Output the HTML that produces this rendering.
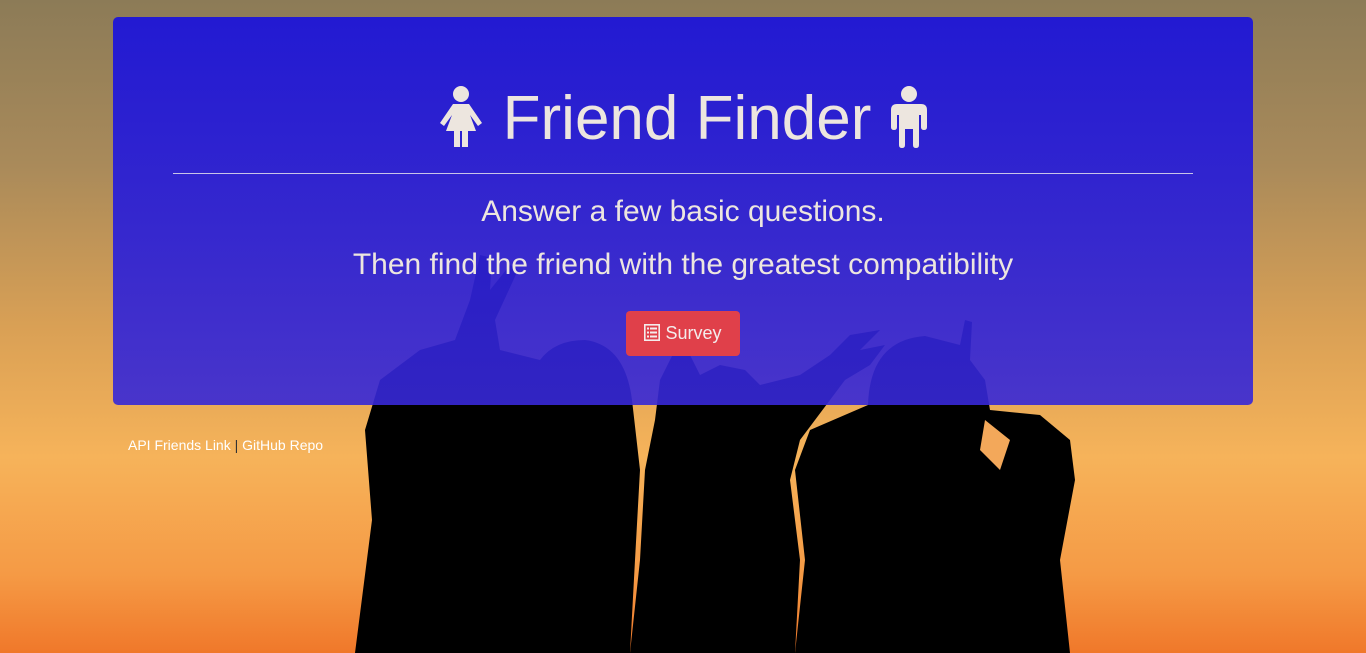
<!DOCTYPE html>
<html><head><meta charset="utf-8"><style>
html,body{margin:0;padding:0;width:1366px;height:653px;overflow:hidden}
body{position:relative;font-family:"Liberation Sans",Arial,sans-serif;background:linear-gradient(180deg,#8c7b57 0%,#a98a5a 25%,#d9a055 50%,#f6b35a 70%,#f59a45 88%,#f0782a 100%)}
svg.bg{position:absolute;left:0;top:0}
.jumbo{position:absolute;left:113px;top:17px;width:1140px;height:388px;border-radius:5px;background:linear-gradient(180deg,rgba(30,22,215,0.96) 0%,rgba(55,40,215,0.9) 100%);text-align:center;color:#ede6df}
h1{margin:0;position:absolute;top:67px;left:0;width:100%;font-weight:normal;font-size:62px;line-height:70px}
hr{position:absolute;left:60px;top:156px;width:1020px;margin:0;border:0;border-top:1px solid #c8c4e8}
.p1{position:absolute;top:178px;width:100%;font-size:30px}
.p2{position:absolute;top:231px;width:100%;font-size:30px}
.btn{position:absolute;left:513px;top:294px;width:114px;height:45px;border-radius:4px;background:#e0404a;color:#f4ecec;font-size:18px;line-height:45px}
.foot{position:absolute;left:128px;top:437px;font-size:14px;color:#fff}
.foot span{color:#333}
</style></head><body>
<svg class="bg" width="1366" height="653" viewBox="0 0 1366 653">
<g fill="#000">
<path d="M355 653 L372 520 L365 430 L380 380 L420 350 L455 340 L470 300 L480 255 L492 258 L490 290 L510 265 L518 270 L495 320 L500 350 L540 360 Q555 340 585 340 Q625 345 632 400 L640 470 L635 560 L630 653 Z"/>
<path d="M630 653 L640 560 L645 470 L655 420 L660 380 L675 350 L690 355 L700 375 L720 365 L745 370 L760 385 L800 375 L830 355 L850 335 L880 330 L860 350 L885 345 L870 365 L845 380 L800 440 L790 480 L800 560 L795 653 Z"/>
<path d="M795 653 L805 560 L795 470 L810 430 L868 405 Q870 340 925 336 L960 345 L965 320 L972 322 L970 360 L985 380 L990 410 L1040 415 L1070 440 L1075 480 L1060 560 L1070 653 Z"/>
<path d="M985 420 L1010 440 L1000 470 L980 450 Z" fill="#f3a85a"/>
</g>
</svg>
<div class="jumbo">
<h1><svg width="48" height="64" viewBox="0 0 48 64" style="vertical-align:-10px"><g fill="#ede6df"><circle cx="24" cy="9" r="8"/><path d="M16 19 L32 19 L45 38 L41 41 L33 30 L39 46 L31 46 L31 62 L25 62 L25 46 L23 46 L23 62 L17 62 L17 46 L9 46 L15 30 L7 41 L3 38 Z"/></g></svg> Friend Finder <svg width="40" height="64" viewBox="0 0 40 64" style="vertical-align:-10px"><g fill="#ede6df"><circle cx="20" cy="9" r="8"/><path d="M8 19 L32 19 Q38 19 38 25 L38 42 Q38 45 35 45 Q32 45 32 42 L32 30 L30 30 L30 60 Q30 63 27 63 Q24 63 24 60 L24 44 L16 44 L16 60 Q16 63 13 63 Q10 63 10 60 L10 30 L8 30 L8 42 Q8 45 5 45 Q2 45 2 42 L2 25 Q2 19 8 19 Z"/></g></svg></h1>
<hr>
<div class="p1">Answer a few basic questions.</div>
<div class="p2">Then find the friend with the greatest compatibility</div>
<div class="btn"><svg width="16" height="17" viewBox="0 0 16 17" style="vertical-align:-2px"><rect x="0.8" y="0.8" width="14.4" height="15.4" fill="none" stroke="#f4ecec" stroke-width="1.6"/><g fill="#f4ecec"><rect x="3" y="3.5" width="2" height="2"/><rect x="6" y="3.5" width="7" height="2"/><rect x="3" y="7.5" width="2" height="2"/><rect x="6" y="7.5" width="7" height="2"/><rect x="3" y="11.5" width="2" height="2"/><rect x="6" y="11.5" width="7" height="2"/></g></svg> Survey</div>
</div>
<div class="foot">API Friends Link <span>|</span> GitHub Repo</div>
</body></html>
